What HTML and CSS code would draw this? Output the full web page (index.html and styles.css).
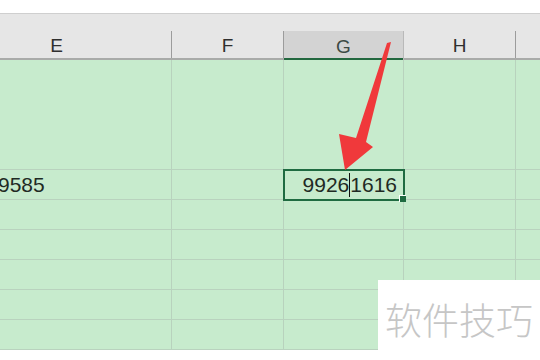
FILE: index.html
```html
<!DOCTYPE html>
<html lang="zh">
<head>
<meta charset="utf-8">
<link rel="stylesheet" href="styles.css">
</head>
<body>
<div class="sheet">
  <div class="topbar"></div>
  <div class="band"></div>
  <div class="cols">
    <div class="colhead">E</div>
    <div class="colhead">F</div>
    <div class="colhead sel">G</div>
    <div class="colhead">H</div>
    <div class="colhead last"></div>
  </div>
  <div class="grid">
    <div class="cell tall"></div><div class="cell tall"></div><div class="cell tall"></div><div class="cell tall"></div><div class="cell tall last"></div>
    <div class="cell num left">9585</div><div class="cell"></div><div class="cell num active">9926<span class="caret"></span>1616</div><div class="cell"></div><div class="cell last"></div>
    <div class="cell"></div><div class="cell"></div><div class="cell"></div><div class="cell"></div><div class="cell last"></div>
    <div class="cell"></div><div class="cell"></div><div class="cell"></div><div class="cell"></div><div class="cell last"></div>
    <div class="cell"></div><div class="cell"></div><div class="cell"></div><div class="cell"></div><div class="cell last"></div>
    <div class="cell"></div><div class="cell"></div><div class="cell"></div><div class="cell"></div><div class="cell last"></div>
    <div class="cell"></div><div class="cell"></div><div class="cell"></div><div class="cell"></div><div class="cell last"></div>
  </div>
  <svg class="arrow" width="540" height="360" viewBox="0 0 540 360">
    <polygon points="391,42 387,43 356,138 339,134 345,170 373,147 366,142" fill="#f0393b"/>
  </svg>
  <div class="watermark">软件技巧</div>
</div>
</body>
</html>
```
FILE: styles.css
```css
html, body {
  margin: 0;
  padding: 0;
  background: #ffffff;
}
.sheet {
  position: relative;
  width: 540px;
  height: 360px;
  overflow: hidden;
  font-family: "Liberation Sans", Arial, sans-serif;
}
.topbar {
  height: 13px;
  background: #ffffff;
  border-bottom: 1px solid #cfcfcf;
}
.band {
  height: 17px;
  background: #e6e6e6;
}
.cols {
  display: grid;
  grid-template-columns: 230px 112px 120px 112px 60px;
  margin-left: -58px;
  height: 27px;
  background: #e6e6e6;
  border-bottom: 2px solid #a9aba9;
}
.colhead {
  display: flex;
  align-items: center;
  justify-content: center;
  font-size: 19px;
  color: #2f2f2f;
  border-right: 1px solid #9c9c9c;
  padding-top: 2px;
}
.colhead.sel {
  background: #d3d3d3;
  color: #3c4a44;
  border-right-color: #b9b9b9;
  box-shadow: inset 0 -2px 0 #23683f;
  margin-bottom: -2px;
}
.colhead.last {
  border-right: none;
}
.grid {
  display: grid;
  grid-template-columns: 230px 112px 120px 112px 60px;
  grid-template-rows: 110px repeat(6, 30px);
  margin-left: -58px;
  background: #c7ebcd;
}
.cell {
  border-right: 1px solid #b8d2bd;
  border-bottom: 1px solid #b9d2be;
  position: relative;
  display: flex;
  align-items: center;
}
.cell.last {
  border-right: none;
}
.num {
  font-size: 21px;
  color: #1f2a24;
}
.left {
  padding-left: 56px;
}
.active {
  justify-content: flex-end;
  padding-right: 6px;
  outline: 2px solid #1f6b41;
  outline-offset: -1px;
  z-index: 1;
}
.active::after {
  content: "";
  position: absolute;
  right: -3px;
  bottom: -3px;
  width: 6px;
  height: 6px;
  background: #1f6b41;
  border: 1px solid #ffffff;
  border-width: 1px 0 0 1px;
}
.caret {
  display: inline-block;
  width: 1px;
  height: 24px;
  background: #111111;
}
.arrow {
  position: absolute;
  left: 0;
  top: 0;
  z-index: 2;
}
.watermark {
  position: absolute;
  left: 378px;
  top: 280px;
  width: 162px;
  height: 80px;
  background: #ffffff;
  color: #c6c6c6;
  font-family: "Noto Sans CJK SC", sans-serif;
  font-weight: 300;
  font-size: 37px;
  line-height: 78px;
  padding-left: 7px;
  box-sizing: border-box;
  z-index: 3;
}
```
